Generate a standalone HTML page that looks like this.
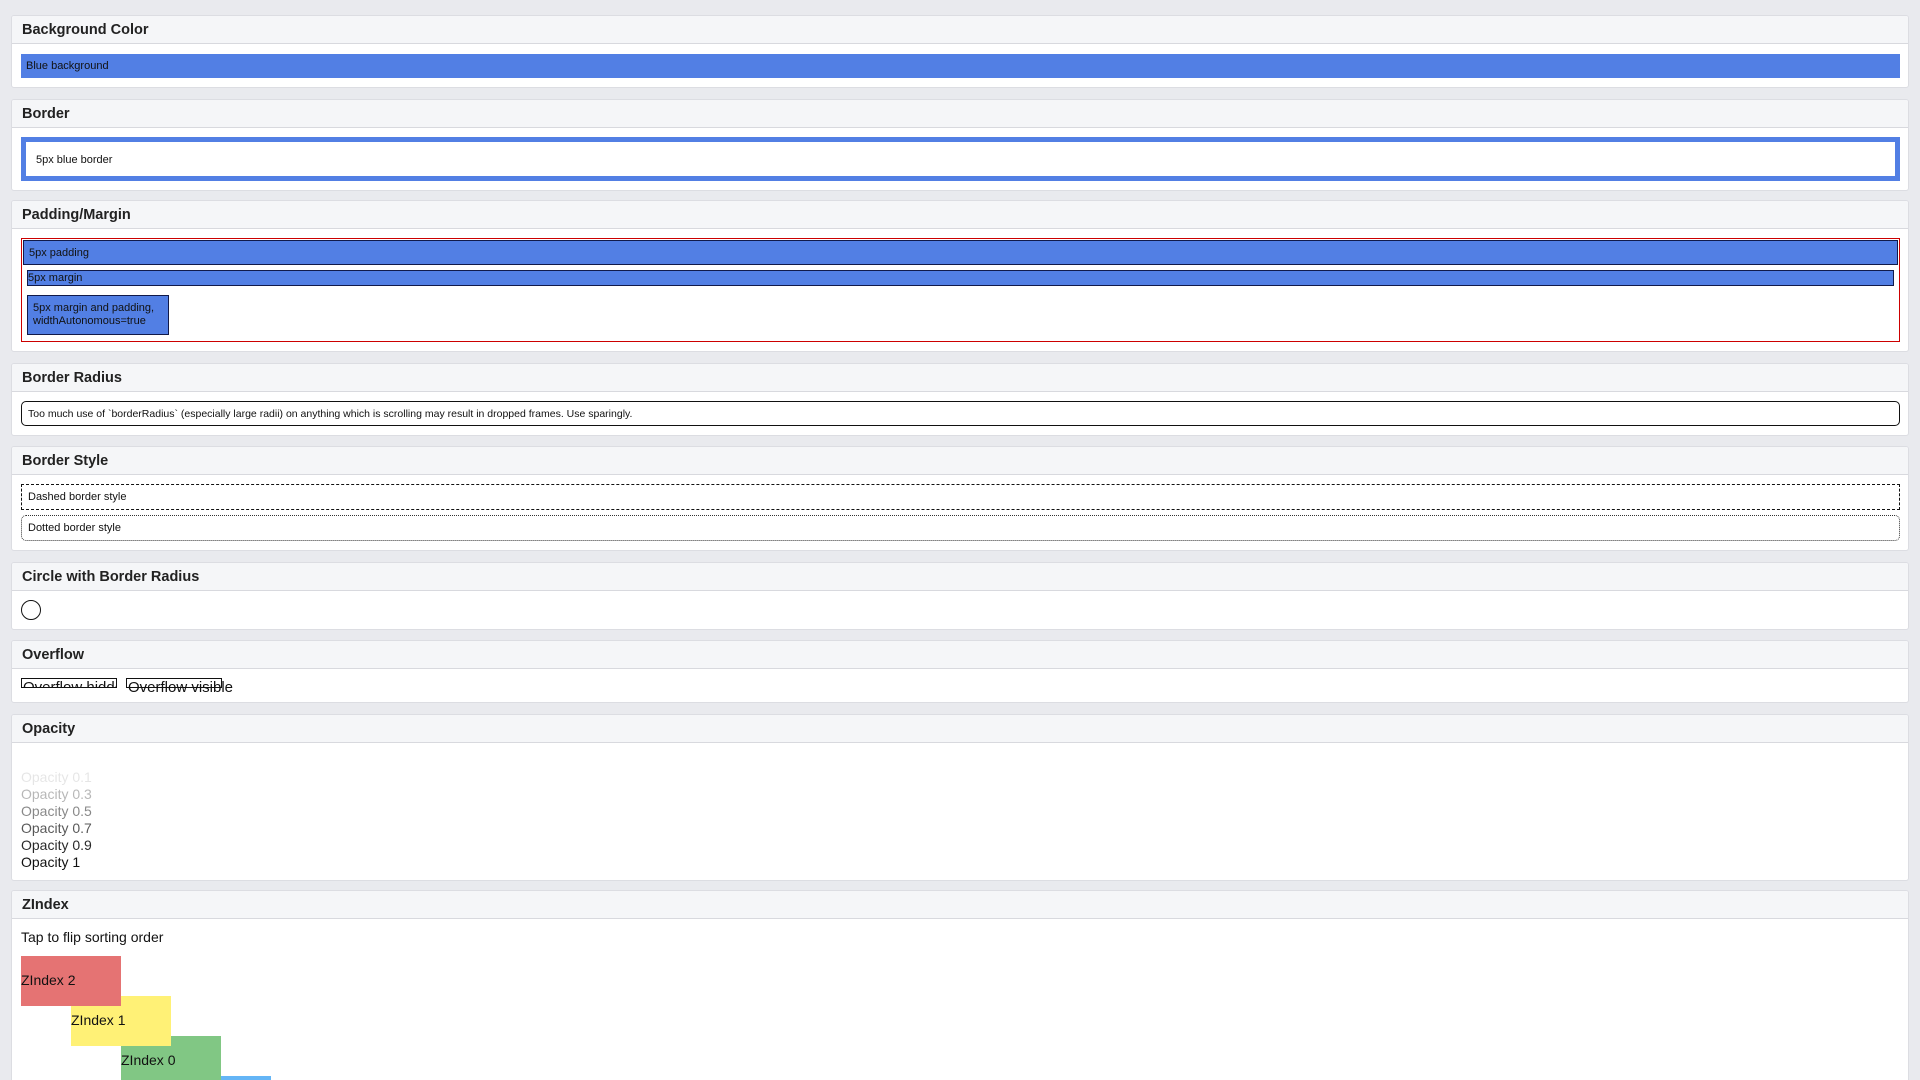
<!DOCTYPE html>
<html><head><meta charset="utf-8"><style>
*{box-sizing:border-box;margin:0;padding:0}
html,body{width:1920px;height:1080px;overflow:hidden}
body{background:#e9eaee;font-family:"Liberation Sans",sans-serif;color:#111;position:relative}
.card{position:absolute;left:11px;width:1898px;background:#fff;border:1px solid #dcdde2;border-radius:3px;overflow:hidden}
.hd{height:28px;background:#f5f6f8;border-bottom:1px solid #d8d9de;font-size:14.5px;font-weight:bold;padding:6px 0 0 10px;color:#222}
.a{position:absolute}
.s{font-size:11px}
.blue{background:#527fe4}
</style></head><body>

<div class="card" style="top:15px;height:73px"><div class="hd">Background Color</div>
<div class="a blue s" style="left:9px;top:38px;width:1879px;height:24px;padding:6px 5px">Blue background</div></div>

<div class="card" style="top:99px;height:92px"><div class="hd">Border</div>
<div class="a s" style="left:9px;top:37px;width:1879px;height:44px;border:5px solid #527fe4;padding:12px 10px">5px blue border</div></div>

<div class="card" style="top:200px;height:152px"><div class="hd">Padding/Margin</div>
<div class="a" style="left:9px;top:37px;width:1879px;height:104px;border:1px solid #c00">
<div class="blue s" style="margin:1px;height:25px;border:1px solid #111a4a;padding:6px 5px">5px padding</div>
<div class="blue s" style="margin:5px 5px 0;height:16px;border:1px solid #111a4a;padding:1px 0">5px margin</div>
<div class="blue s" style="margin:9px 5px 0;width:142px;height:40px;border:1px solid #111a4a;padding:6px 5px;line-height:13px">5px margin and padding,<br>widthAutonomous=true</div>
</div></div>

<div class="card" style="top:363px;height:73px"><div class="hd">Border Radius</div>
<div class="a s" style="left:9px;top:37px;width:1879px;height:25px;border:1px solid #111;border-radius:5px;padding:6px 6px;font-size:10.5px">Too much use of `borderRadius` (especially large radii) on anything which is scrolling may result in dropped frames. Use sparingly.</div></div>

<div class="card" style="top:446px;height:105px"><div class="hd">Border Style</div>
<div class="a s" style="left:9px;top:37px;width:1879px;height:26px;border:1px dashed #111;padding:6px 6px">Dashed border style</div>
<div class="a s" style="left:9px;top:68px;width:1879px;height:26px;border:1px dotted #333;border-radius:5px;padding:6px 6px">Dotted border style</div></div>

<div class="card" style="top:562px;height:68px"><div class="hd">Circle with Border Radius</div>
<div class="a" style="left:9px;top:37px;width:20px;height:20px;border:1px solid #111;border-radius:50%"></div></div>

<div class="card" style="top:640px;height:63px"><div class="hd">Overflow</div>
<div class="a" style="left:9px;top:37px;width:96px;height:10px;border:1px solid #111;overflow:hidden;font-size:15px;line-height:18px;padding-left:1px;white-space:nowrap">Overflow hidden</div>
<div class="a" style="left:114px;top:37px;width:96px;height:10px;border:1px solid #111;font-size:15px;line-height:18px;padding-left:1px;white-space:nowrap">Overflow visible</div></div>

<div class="card" style="top:714px;height:167px"><div class="hd">Opacity</div>
<div class="a" style="left:9px;top:54px;font-size:14px;line-height:17px">
<div style="opacity:.1">Opacity 0.1</div><div style="opacity:.3">Opacity 0.3</div><div style="opacity:.5">Opacity 0.5</div><div style="opacity:.7">Opacity 0.7</div><div style="opacity:.9">Opacity 0.9</div><div>Opacity 1</div></div></div>

<div class="card" style="top:890px;height:190px;border-bottom:none;border-radius:3px 3px 0 0"><div class="hd">ZIndex</div>
<div class="a" style="left:9px;top:38px;font-size:14px">Tap to flip sorting order</div>
<div class="a" style="left:209px;top:185px;width:50px;height:50px;background:#64b5f6"></div>
<div class="a" style="left:109px;top:145px;width:100px;height:50px;background:#81c784;font-size:14px;padding-top:16px">ZIndex 0</div>
<div class="a" style="left:59px;top:105px;width:100px;height:50px;background:#fff176;font-size:14px;padding-top:16px">ZIndex 1</div>
<div class="a" style="left:9px;top:65px;width:100px;height:50px;background:#e57373;font-size:14px;padding-top:16px">ZIndex 2</div>
</div>
</body></html>
